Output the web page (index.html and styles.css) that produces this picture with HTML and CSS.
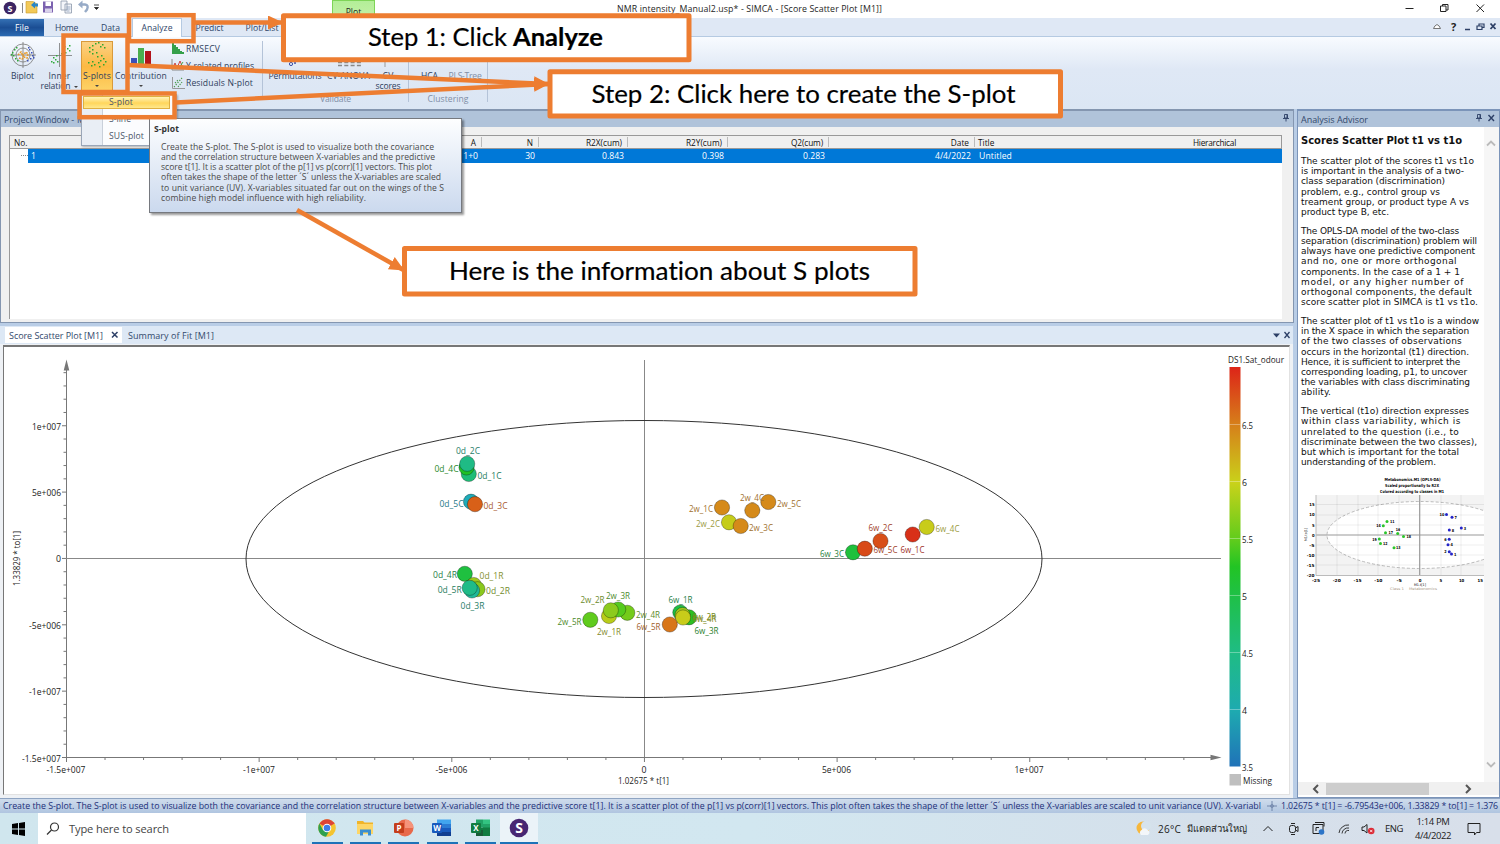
FILE: index.html
```html
<!DOCTYPE html>
<html lang="en">
<head>
<meta charset="utf-8">
<title>NMR intensity_Manual2.usp* - SIMCA</title>
<link rel="stylesheet" href="styles.css">
</head>
<body>
<div class="screen">
  <header class="titlebar">
    <svg class="quick" width="110" height="18" viewBox="0 0 110 18">
      <circle cx="10" cy="8" r="6.3" fill="#3c2463"/>
      <text x="10" y="11.5" class="logo-s">S</text>
      <path d="M22.500 3v10" stroke="#888"/>
      <path d="M26 1.500h7l4 2.500v9H26z" fill="#f3c957" stroke="#c99a2e" stroke-width=".6"/><path d="M31 5l4-3.500v2h3v3h-3v2z" fill="#2a86c8"/>
      <path d="M43 1.500h10v11H43z" fill="#7c62b0"/><path d="M45.500 1.500h5.500v4.500h-5.500z" fill="#fff"/><path d="M45 8.500h7v4h-7z" fill="#d9d2ea"/>
      <path d="M61 1h6v9h-6zM65 4h6.500v9H65z" fill="#f4f6fa" stroke="#8c98aa" stroke-width=".8"/><path d="M66.500 7h4M66.500 9h4M66.500 11h3" stroke="#7a90b0" stroke-width=".7"/>
      <path d="M80.500 4.500h4.500q4 .5 2 5l-2 2.500" fill="none" stroke="#97abc7" stroke-width="2.400"/><path d="M78 4.500l4.500-4v8z" fill="#97abc7"/>
      <path d="M94 5h5M94.500 7.500h4l-2 2z" stroke="#222" stroke-width=".8" fill="#222"/>
    </svg>
    <div class="plot-tab"><span>Plot</span></div>
    <span class="doc-title" data-w="265">NMR intensity_Manual2.usp* - SIMCA - [Score Scatter Plot [M1]]</span>
    <svg class="winctl" width="100" height="18" viewBox="1400 0 100 18" fill="none" stroke="#222">
      <path d="M1405.500 8.500h8M1440.500 6h5.500v5.500h-5.500zM1442.500 6v-1.500h5.500v5.500h-2M1476.500 4.500l7.500 7.500M1484 4.500l-7.500 7.500"/>
    </svg>
  </header>

  <nav class="tabs">
    <span class="tab file"><i data-w="14">File</i></span>
    <span class="tab t-home"><i data-w="23">Home</i></span>
    <span class="tab t-data"><i data-w="19">Data</i></span>
    <span class="tab active"><i data-w="31">Analyze</i></span>
    <span class="tab t-pred"><i data-w="28">Predict</i></span>
    <span class="tab t-list"><i data-w="33">Plot/List</i></span>
    <svg class="helpctl" width="75" height="18" viewBox="1425 18 75 18">
      <path d="M1433.500 28.500h7q-1-3-3.500-4-2.500 1-3.500 4z" fill="#fff" stroke="#555" stroke-width=".8"/>
      <text x="1451" y="31" class="qmark">?</text>
      <path d="M1465 29.500h5" stroke="#2c3f66" stroke-width="1.500"/>
      <path d="M1477 26h5v3.500h-5zM1479 26v-2h5v3.500h-2" fill="none" stroke="#2c3f66" stroke-width="1.200"/>
      <path d="M1490.500 23.500l5 5.500M1495.500 23.500l-5 5.500" stroke="#2c3f66" stroke-width="1.800"/>
    </svg>
  </nav>

  <section class="ribbon">
    <div class="tool w-biplot">
      <svg width="26" height="26" viewBox="0 0 26 26" fill="none"><g stroke="#777" stroke-width=".8"><circle cx="13" cy="13" r="11"/><circle cx="13" cy="13" r="7"/><path d="M13 0v26M0 13h26"/></g><g id="dots-bi"></g><path d="M8 13l3-3 2 4 3-4 2 2-1 4-3-1-2 2-3-1" stroke="#e89a28" stroke-width="1.600" stroke-dasharray="1.800 1"/></svg>
      <span data-w="23">Biplot</span>
    </div>
    <div class="tool w-inner">
      <svg width="26" height="26" viewBox="0 0 26 26"><path d="M12.500 1v24M1 13.500h24" stroke="#777" stroke-width=".8"/><g id="dots-in"></g></svg>
      <span data-w="22">Inner</span><span data-w="37">relation <b class="dd"></b></span>
    </div>
    <div class="tool w-splots hot">
      <svg width="26" height="26" viewBox="0 0 26 26"><g id="dots-s"></g></svg>
      <span data-w="28">S-plots</span><b class="dd"></b>
    </div>
    <div class="tool w-contrib">
      <svg width="26" height="26" viewBox="0 0 26 26"><path d="M3 16h6v8H3z" fill="#3a50b8"/><path d="M10 6h6v18h-6z" fill="#4bae4f"/><path d="M17 9h6v15h-6z" fill="#b3131b"/></svg>
      <span data-w="52">Contribution</span><b class="dd"></b>
    </div>
    <div class="small-tools">
      <div><svg width="14" height="13" viewBox="0 0 14 13"><path d="M1 1h2v2h2v2h2v2h2v2h2v1h2v2H1z" fill="#35a04a"/></svg><span data-w="34">RMSECV</span></div>
      <div><svg width="14" height="13" viewBox="0 0 14 13" fill="none"><path d="M1 0v11h12" stroke="#888"/><path d="M2 9l2-5 2 5 3-7 3 7" stroke="#c44"/><path d="M2 10l3-4 3 3 4-6" stroke="#4a4"/></svg><span data-w="68">Y-related profiles</span></div>
      <div><svg width="14" height="13" viewBox="0 0 14 13"><path d="M1.500 0v11.500H14" stroke="#999" fill="none"/><path d="M3 10l8-9M4 6l3-3M7 10l4-5" stroke="#4a9a4a" stroke-width="1.200" stroke-dasharray="1.300 1.400"/></svg><span data-w="67">Residuals N-plot</span></div>
    </div>
    <div class="group validate">
      <div class="row">
        <div class="tool w-perm"><svg width="26" height="26" viewBox="0 0 26 26"><circle cx="9" cy="22" r="1.600" fill="none" stroke="#3a50a8"/><circle cx="13" cy="21" r="1" fill="#3a50a8"/></svg><span data-w="53">Permutations</span></div>
        <div class="tool w-cva"><svg width="26" height="26" viewBox="0 0 26 26"><path d="M2 20.500h23M2 23.500h23" stroke="#888" stroke-width="1.500" stroke-dasharray="4 2.300"/></svg><span data-w="43">CV-ANOVA</span></div>
        <div class="tool w-cvs"><svg width="26" height="26" viewBox="0 0 26 26"><path d="M10 12v13" stroke="#999"/></svg><span data-w="11">CV</span><span data-w="25">scores</span></div>
      </div>
      <div class="caption" data-w="31">Validate</div>
    </div>
    <div class="group clustering">
      <div class="row">
        <div class="tool w-hca"><svg width="26" height="26"></svg><span data-w="17">HCA</span></div>
        <div class="tool w-pls"><svg width="26" height="26"></svg><span class="dim" data-w="33">PLS-Tree</span></div>
      </div>
      <div class="caption" data-w="41">Clustering</div>
    </div>
  </section>

  <main class="work">
    <div class="left">
      <section class="project">
        <div class="pane-head"><span data-w="70">Project Window -</span><span>M1</span>
          <svg class="pin" width="10" height="12" viewBox="0 0 10 12"><path d="M3.500 2.500h3v3.500h-3zM2 6.500h6M5 6.500v3M6 2.500v4" stroke="#2c3f66" stroke-width=".9" fill="none"/></svg>
        </div>
        <div class="list">
          <div class="grid head"><span class="l">No.</span><span>A</span><span>N</span><span data-w="36">R2X(cum)</span><span data-w="36">R2Y(cum)</span><span data-w="32">Q2(cum)</span><span>Date</span><span class="l">Title</span><span class="l" data-w="43">Hierarchical</span></div>
          <div class="rowline"><i class="stub"></i><div class="grid sel"><span class="l">1</span><span>1+0</span><span>30</span><span>0.843</span><span>0.398</span><span>0.283</span><span data-w="36">4/4/2022</span><span class="l ttl" data-w="33">Untitled</span></div></div>
        </div>
      </section>
      <section class="doc">
        <div class="doc-tabs">
          <span class="doc-tab on"><i data-w="94">Score Scatter Plot [M1]</i><svg width="8" height="8" viewBox="0 0 8 8"><path d="M1 1l5.500 5.500M6.500 1L1 6.500" stroke="#2c3f66" stroke-width="1.500"/></svg></span>
          <span class="doc-tab"><i data-w="86">Summary of Fit [M1]</i></span>
          <svg class="doc-ctl" width="20" height="10" viewBox="0 0 20 10"><path d="M1 3.500h7L4.500 7.500z" fill="#2c3f66"/><path d="M12.500 2l5 6M17.500 2l-5 6" stroke="#2c3f66" stroke-width="1.300"/></svg>
        </div>
        <div class="plot">
          <svg id="chart" width="1285" height="447" viewBox="4 347 1285 447">
            <defs><linearGradient id="scale" x1="0" y1="0" x2="0" y2="1">
              <stop offset="0" stop-color="#dd2418"/><stop offset=".145" stop-color="#d6801a"/><stop offset=".29" stop-color="#c9d21a"/><stop offset=".43" stop-color="#62cc1c"/><stop offset=".5" stop-color="#22c424"/><stop offset=".575" stop-color="#1fc048"/><stop offset=".715" stop-color="#1fbc84"/><stop offset=".86" stop-color="#1eaab0"/><stop offset="1" stop-color="#2072b8"/>
            </linearGradient></defs>
          </svg>
        </div>
      </section>
    </div>
    <aside class="advisor">
      <div class="pane-head"><span data-w="67">Analysis Advisor</span>
        <svg class="pin" width="24" height="12" viewBox="0 0 24 12"><path d="M3.500 2.500h3v3.500h-3zM2 6.500h6M5 6.500v3M6 2.500v4" stroke="#2c3f66" stroke-width=".9" fill="none"/><path d="M14.500 3l5.500 6M20 3l-5.500 6" stroke="#2c3f66" stroke-width="1.400"/></svg>
      </div>
      <div class="adv-body">
        <div class="adv-text">
          <h1><span data-w="161">Scores Scatter Plot t1 vs t1o</span></h1>
          <p><span data-w="173">The scatter plot of the scores t1 vs t1o</span><span data-w="163">is important in the analysis of a two-</span><span data-w="144">class separation (discrimination)</span><span data-w="139">problem, e.g., control group vs</span><span data-w="168">treament group, or product type A vs</span><span data-w="88">product type B, etc.</span></p>
          <p><span data-w="158">The OPLS-DA model of the two-class</span><span data-w="176">separation (discrimination) problem will</span><span data-w="174">always have one predictive component</span><span data-w="156">and no, one or more orthogonal</span><span data-w="159">components. In the case of a 1 + 1</span><span data-w="163">model, or any higher number of</span><span data-w="171">orthogonal components, the default</span><span data-w="177">score scatter plot in SIMCA is t1 vs t1o.</span></p>
          <p><span data-w="178">The scatter plot of t1 vs t1o is a window</span><span data-w="168">in the X space in which the separation</span><span data-w="161">of the two classes of observations</span><span data-w="168">occurs in the horizontal (t1) direction.</span><span data-w="159">Hence, it is sufficient to interpret the</span><span data-w="166">corresponding loading, p1, to uncover</span><span data-w="169">the variables with class discriminating</span><span data-w="30">ability.</span></p>
          <p><span data-w="168">The vertical (t1o) direction expresses</span><span data-w="160">within class variability, which is</span><span data-w="158">unrelated to the question (i.e., to</span><span data-w="176">discriminate between the two classes),</span><span data-w="158">but which is important for the total</span><span data-w="135">understanding of the problem.</span></p>
          <svg id="mini" width="183" height="118" viewBox="1301 476 183 118"></svg>
        </div>
        <div class="vbar"><svg width="10" height="7" viewBox="0 0 10 7"><path d="M1 5.500l4-4 4 4" class="sc"/></svg><svg width="10" height="7" viewBox="0 0 10 7"><path d="M1 1.500l4 4 4-4" class="sc"/></svg></div>
      </div>
      <div class="hbar"><svg width="8" height="10" viewBox="0 0 8 10"><path d="M6 1L2 5l4 4" class="hc"/></svg><i></i><svg width="8" height="10" viewBox="0 0 8 10"><path d="M2 1l4 4-4 4" class="hc"/></svg></div>
    </aside>
  </main>

  <footer class="status">
    <span class="msg" data-w="1258">Create the S-plot. The S-plot is used to visualize both the covariance and the correlation structure between X-variables and the predictive score t[1]. It is a scatter plot of the p[1] vs p(corr)[1] vectors. This plot often takes the shape of the letter ´S´ unless the X-variables are scaled to unit variance (UV). X-variabl</span>
    <svg width="12" height="12" viewBox="0 0 12 12"><path d="M6 1v10M1 6h10" stroke="#6a7fa5" stroke-width=".9"/><circle cx="6" cy="6" r="1.500" fill="none" stroke="#6a7fa5" stroke-width=".7"/></svg>
    <span data-w="217">1.02675 * t[1] = -6.79543e+006, 1.33829 * to[1] = 1.376</span>
  </footer>

  <footer class="taskbar">
    <div class="start"><svg width="14" height="14" viewBox="0 0 14 14"><path d="M0 2l6-.9v5.400H0zM7 1l6-1v6.500H7zM0 7.500h6V13l-6-.9zM7 7.500h6V14l-6-1z" fill="#000"/></svg></div>
    <div class="search"><svg width="14" height="14" viewBox="0 0 14 14" fill="none" stroke="#333" stroke-width="1.200"><circle cx="8.500" cy="5" r="4"/><path d="M5.500 8L1 12.500"/></svg><span data-w="100">Type here to search</span></div>
    <div class="apps">
      <div class="app"><svg width="20" height="20" viewBox="0 0 20 20"><circle cx="10" cy="10" r="8.800" fill="#f4c430"/><path d="M10 10L2.400 5.600A8.800 8.800 0 0 1 17.600 5.600z" fill="#dd4436"/><path d="M2.400 5.600A8.800 8.800 0 0 0 9 18.700L13 11.500 6 12z" fill="#2fa04f"/><path d="M10 5.600h7.600l-.5-1H8z" fill="#dd4436"/><circle cx="10" cy="10" r="4.300" fill="#fff"/><circle cx="10" cy="10" r="3.300" fill="#3f7de8"/></svg></div>
      <div class="app"><svg width="20" height="20" viewBox="0 0 20 20"><path d="M2 3h6l1.500 1.500H18V16H2z" fill="#f0b429"/><path d="M2 6h16v10H2z" fill="#fdd667"/><path d="M5 17.500v-6h11v6h-3v-3H8v3z" fill="#3b8ed0"/></svg></div>
      <div class="app"><svg width="20" height="20" viewBox="0 0 20 20"><circle cx="11" cy="10" r="8.500" fill="#e8694a"/><path d="M11 1.500a8.500 8.500 0 0 1 8.500 8.500H11z" fill="#f5937a"/><rect x="0" y="5" width="10" height="10" rx="1" fill="#c43e1c"/><text x="5" y="13" class="ms">P</text></svg></div>
      <div class="app"><svg width="20" height="20" viewBox="0 0 20 20"><path d="M5 1.500h14v5H5z" fill="#41a5ee"/><path d="M5 6h14v4H5z" fill="#2b7cd3"/><path d="M5 10h14v4H5z" fill="#185abd"/><path d="M5 14h14v4H5z" fill="#103f91"/><rect x="0" y="5" width="10" height="10" rx="1" fill="#185abd"/><text x="5" y="13" class="ms">W</text></svg></div>
      <div class="app"><svg width="20" height="20" viewBox="0 0 20 20"><path d="M5 1.500h7v8H5z" fill="#21a366"/><path d="M12 1.500h7v5h-7z" fill="#33c481"/><path d="M12 6h7v5h-7z" fill="#21a366"/><path d="M5 9.500h14V18H5z" fill="#107c41"/><path d="M5 12h7v6H5z" fill="#185c37"/><rect x="0" y="5" width="10" height="10" rx="1" fill="#107c41"/><text x="5" y="13" class="ms">X</text></svg></div>
      <div class="app cur"><svg width="20" height="20" viewBox="0 0 20 20"><circle cx="10" cy="10" r="9.300" fill="#482672"/><text x="10" y="15" class="bigs">S</text></svg></div>
    </div>
    <div class="tray">
      <svg width="18" height="18" viewBox="0 0 18 18"><circle cx="8" cy="8" r="6.500" fill="#f6b73c"/><circle cx="11" cy="6" r="5" fill="#d6e3ec"/><path d="M6 15a3 3 0 0 1 .5-5 3.500 3.500 0 0 1 6 0A2.700 2.700 0 0 1 13 15z" fill="#f3f6f9"/></svg>
      <span class="temp" data-w="23">26°C</span><span class="thai" data-w="60">มีแดดส่วนใหญ่</span>
      <svg class="tr" viewBox="1255 813 125 31" width="125" height="31" fill="none" stroke="#222">
        <path d="M1263.500 831l4.500-4.500 4.500 4.500"/>
        <rect x="1289.500" y="825.500" width="6" height="7" rx="2"/><path d="M1295.500 828l2.500-1.500v5l-2.500-1.500M1291 823.500h4M1291 834.500h4"/>
        <path d="M1313 824.500h10v9h-10zM1315 822.500h9v4M1316 831v-3.500h3"/><circle cx="1321.500" cy="832" r="2.800" fill="#2b74c8" stroke="none"/>
        <path d="M1339 833a9 9 0 0 1 10-8M1342 833.500a6 6 0 0 1 7-5.500M1345 833.500a3.500 3.500 0 0 1 4-3" stroke-width=".9"/>
        <path d="M1362 827h2l3-2.500v8.500l-3-2.500h-2z"/><circle cx="1371.200" cy="831" r="3.300" fill="#dc2a35" stroke="none"/><path d="M1370 829.800l2.400 2.400M1372.400 829.800l-2.400 2.400" stroke="#fff" stroke-width=".8"/>
      </svg>
      <span class="lang" data-w="18">ENG</span>
      <div class="clock"><span data-w="33">1:14 PM</span><span data-w="36">4/4/2022</span></div>
      <svg class="note" width="14" height="14" viewBox="0 0 14 14"><path d="M1 1.500h12v9H9.500L7.500 13v-2.500H1z" fill="none" stroke="#222"/></svg>
    </div>
  </footer>

  <div class="menu">
    <div class="mi hl"><span data-w="24">S-plot</span></div>
    <div class="mi"><span data-w="22">S-line</span></div>
    <div class="mi"><span data-w="35">SUS-plot</span></div>
  </div>
  <div class="tooltip">
    <strong><span data-w="25">S-plot</span></strong>
    <p><span data-w="273">Create the S-plot. The S-plot is used to visualize both the covariance</span><span data-w="274">and the correlation structure between X-variables and the predictive</span><span data-w="271">score t[1]. It is a scatter plot of the p[1] vs p(corr)[1] vectors. This plot</span><span data-w="280">often takes the shape of the letter ´S´ unless the X-variables are scaled</span><span data-w="283">to unit variance (UV). X-variables situated far out on the wings of the S</span><span data-w="205">combine high model influence with high reliability.</span></p>
  </div>
  <svg class="notes" width="1500" height="844" viewBox="0 0 1500 844">
    <defs><marker id="tip" orient="auto" markerUnits="userSpaceOnUse" markerWidth="15" markerHeight="14" refX="14" refY="7"><path d="M0 0l15 7-15 7z" fill="#ed7d31"/></marker></defs>
    <g fill="none" stroke="#ed7d31" stroke-width="4.500">
      <rect x="129" y="15.200" width="64.500" height="26"/>
      <rect x="63.500" y="35.500" width="64" height="56.500"/>
      <rect x="79.500" y="93.500" width="95" height="23.700"/>
      <g marker-end="url(#tip)">
        <path d="M195 22.500H282"/><path d="M128 65L548 84"/><path d="M176 102.500L548 84"/><path d="M297 210L403.500 270"/>
      </g>
      <g fill="#fff" stroke-width="5" stroke-linejoin="round">
        <rect x="283.500" y="15.800" width="405.500" height="44"/><rect x="550" y="71.800" width="510.500" height="44.200"/><rect x="404.500" y="248.500" width="510.500" height="45.500"/>
      </g>
    </g>
    <g class="note-text">
      <text x="368" y="45.500" textLength="139" lengthAdjust="spacingAndGlyphs">Step 1: Click</text><text x="513" y="45.500" textLength="90" lengthAdjust="spacingAndGlyphs" font-weight="700">Analyze</text>
      <text x="591.500" y="102.500" textLength="424" lengthAdjust="spacingAndGlyphs">Step 2: Click here to create the S-plot</text>
      <text x="449" y="279.500" textLength="421" lengthAdjust="spacingAndGlyphs">Here is the information about S plots</text>
    </g>
  </svg>
</div>
<script src="app.js"></script>
</body>
</html>
```
FILE: styles.css
```css
* { box-sizing: border-box; }
body { margin: 0; font-family: "Open Sans", "Noto Sans", sans-serif; font-size: 8.6px; color: #1e1e1e; }
i { font-style: normal; }
svg { display: block; flex: none; }
[data-w] { white-space: nowrap; }
.screen { position: relative; width: 1500px; height: 844px; overflow: hidden; display: flex; flex-direction: column; background: #dce6f4; }

.titlebar { height: 18px; flex: none; background: #fff; display: flex; }
.quick { width: 110px; }
.logo-s { font: 700 9px "Open Sans", sans-serif; fill: #fff; text-anchor: middle; }
.plot-tab { margin-left: 222px; width: 43px; height: 18px; background: linear-gradient(#b3ee98, #c4f0a6); border: 1px solid #7ed457; border-bottom: 0; display: flex; justify-content: center; padding-top: 5px; line-height: 12px; }
.doc-title { margin-left: 242px; line-height: 19px; font-size: 8.8px; }
.winctl { margin-left: auto; }

.tabs { height: 19px; flex: none; display: flex; background: #dfe8f5; border-bottom: 1px solid #b5cae2; line-height: 20px; color: #2e4468; }
.tab { display: flex; justify-content: center; height: 18px; }
.file { width: 44px; height: 17px; margin-top: 1px; line-height: 18px; background: linear-gradient(#3470b4, #1b4e94 50%, #2b6ab2); color: #fff; }
.t-home { width: 45px; }
.t-data { width: 43px; }
.active { width: 50px; height: 19px; background: #fff; border: 1px solid #b5cae2; border-bottom: 0; line-height: 19px; }
.t-pred { width: 55px; }
.t-list { width: 50px; }
.helpctl { margin-left: auto; }
.qmark { font: 700 11px "Open Sans", sans-serif; fill: #222; }

.ribbon { height: 72px; flex: none; display: flex; padding-top: 4px; background: linear-gradient(#f8fbff, #dfe8f5 45%, #dbe6f4); color: #2e3e5c; }
.tool { display: flex; flex-direction: column; align-items: center; line-height: 10px; padding-top: 1px; }
.tool > svg { margin-bottom: 3px; }
.dd { display: inline-block; width: 0; height: 0; border: 2px solid transparent; border-top-color: #444; border-bottom: 0; margin: 1px; }
.tool > .dd { margin-top: 4px; }
.w-biplot { width: 45px; }
.w-inner { width: 29px; margin-right: 7px; }
.w-splots { width: 32px; height: 51px; }
.hot { background: linear-gradient(#fbd184, #fcb943 50%, #fdd367); border: 1px solid #d99a3b; padding-top: 0; }
.w-contrib { width: 56px; }
.small-tools { width: 94px; padding: 1px 0 0 2px; border-right: 1px solid #b4c3d8; height: 58px; display: flex; flex-direction: column; gap: 4.300px; }
.small-tools div { display: flex; align-items: center; height: 13px; }
.small-tools svg { margin-right: 1px; }
.group { border-right: 1px solid #b4c3d8; height: 61px; display: flex; flex-direction: column; align-items: center; justify-content: space-between; }
.validate { width: 146px; }
.clustering { width: 79px; }
.row { display: flex; width: 100%; height: 53px; flex: none; }
.w-perm { width: 64px; } .w-cva { width: 43px; } .w-cvs { width: 36px; }
.w-hca { width: 41px; } .w-pls { width: 30px; }
.dim, .caption { color: #7f8ea6; }
.caption { line-height: 10px; margin-top: 0; }

.work { flex: 1; display: flex; min-height: 0; background: #b9cde6; }
.left { width: 1294px; display: flex; flex-direction: column; }
.project { height: 214px; flex: none; border: 1px solid #8496b0; border-top-width: 2px; background: #f0f0f0; }
.pane-head { height: 16px; background: #b0c3da; display: flex; gap: 3px; line-height: 17px; padding-left: 3px; color: #33496c; font-size: 9px; }
.pin { margin: 1px 3px 0 auto; }
.project .pin { margin-right: 2px; }
.advisor .pin { margin-right: 1px; }
.list { margin: 8px 11px 0 8px; height: 184px; background: #fff; border-left: 1px solid #999; }
.grid { display: grid; grid-template-columns: 425px 47px 57px 89px 100px 101px 146px 215px 1fr; }
.grid span { text-align: right; padding-right: 6px; justify-self: end; }
.grid .l { justify-self: start; padding: 0 0 0 3px; text-align: left; }
.head { height: 14px; line-height: 13px; background: #f0f0f0; border: 1px solid #999; border-left: 0; font-size: 8.3px; color: #111; }
.head span:not(.l) { position: relative; }
.head span:not(.l)::after { content: ""; position: absolute; right: 0; top: 1px; height: 10px; border-right: 1px solid #bbb; }
.head .l:first-child { padding-left: 4px; }
.rowline { display: flex; height: 13.500px; }
.stub { width: 18px; height: 7px; border-bottom: 1px dotted #888; clip-path: inset(0 0 0 10px); flex: none; }
.sel { flex: 1; background: #0078d7; color: #fff; line-height: 14px; grid-template-columns: 407px 47px 57px 89px 100px 101px 146px 215px 1fr; }
.sel span { padding-right: 4px; }
.sel .ttl { padding-left: 4px; }
.doc { flex: 1; display: flex; flex-direction: column; background: #eef1f5; border-top: 3px solid #b9cde6; padding: 0 3px 3px; border-right: 1px solid #b9cde6; }
.doc-tabs { height: 18px; flex: none; background: #dde8f5; display: flex; margin: 0 -3px; padding: 1px 6px 0 5px; line-height: 15px; font-size: 9px; color: #33496c; }
.doc-tab { display: flex; align-items: center; gap: 8px; padding: 0 7px 0 6px; height: 16px; }
.doc-tab.on { background: #fff; padding-left: 4px; }
.doc-tab.on svg { margin-right: -4px; }
.doc-ctl { margin: 3px -5px 0 auto; }
.plot { flex: 1; border: 1px solid #e2e2e2; border-left: 1px solid #777; border-top: 2px solid #777; background: #fff; margin-top: 1px; overflow: hidden; }
.plot text { font-size: 8.300px; dominant-baseline: central; fill: #222; }

.advisor { flex: 1; margin-left: 3px; border: 1px solid #7b94b9; border-top-width: 2px; background: #fff; display: flex; flex-direction: column; }
.adv-body { flex: 1; display: flex; min-height: 0; }
.adv-text { width: 186px; padding: 8px 0 0 3px; font: 9px/10.200px "DejaVu Sans", sans-serif; color: #111; }
.adv-text h1 { font-size: 10px; line-height: 12px; margin: 0 0 9px; }
.adv-text p { margin: 0 0 8.600px; }
.adv-text p span, .adv-text h1 span, .tooltip span { display: block; width: max-content; }
.vbar { flex: 1; background: #f6f6f6; display: flex; flex-direction: column; justify-content: space-between; align-items: center; padding: 13px 2px 14px 0; }
.sc { fill: none; stroke: #bbb; stroke-width: 1.800; }
.hc { fill: none; stroke: #555; stroke-width: 2; }
.hbar { height: 13px; margin-bottom: 2px; background: #f0f0f0; display: flex; align-items: center; padding-left: 14px; }
.hbar i { width: 103px; height: 12px; background: #cdcdcd; margin: 0 35px 0 6px; }

.status { height: 15px; flex: none; border-top: 1px solid #8ea4c2; background: linear-gradient(#cfdcec, #b0c5e0); display: flex; align-items: center; color: #1d2f78; font-size: 8.800px; padding-left: 3px; }
.status svg { margin: 0 3px 0 5px; }

.taskbar { height: 31px; flex: none; display: flex; background: linear-gradient(90deg, #d0e6ee, #d2e7f0 50%, #d5e0eb 80%, #d8dfea); }
.start { width: 38px; display: flex; align-items: center; padding-left: 12px; }
.search { width: 268px; background: #fff; display: flex; align-items: center; gap: 9px; padding-left: 8px; font-size: 11.100px; color: #444; }
.apps { display: flex; padding-left: 2px; gap: 0.400px; }
.app { width: 38px; display: flex; justify-content: center; padding-top: 5px; background: linear-gradient(#1d72b8, #1d72b8) center bottom / 31px 2px no-repeat; }
.app.cur { background: linear-gradient(#1d72b8, #1d72b8) center bottom / 38px 2px no-repeat, #ebf3f8; }
.ms { font: 700 8px "Open Sans", sans-serif; fill: #fff; text-anchor: middle; }
.bigs { font: 700 14px "Open Sans", sans-serif; fill: #fff; text-anchor: middle; }
.tray { margin-left: auto; display: flex; align-items: center; font-size: 9.500px; color: #222; width: 365px; }
.temp { margin-left: 5px; width: 23px; font-size: 10px; }
.thai { margin-left: 6px; width: 60px; }
.tr { margin-left: 8px; }
.lang { margin-left: 5px; }
.clock { width: 36px; margin-left: 12px; display: flex; flex-direction: column; align-items: center; line-height: 14px; }
.note { margin-left: 16px; }

.menu { position: absolute; left: 81px; top: 94px; width: 96px; height: 52px; background: linear-gradient(90deg, #e9eef5 20px, #c9d0da 20px, #c9d0da 21px, #fbfcfe 21px); border: 1px solid #9aa6b8; color: #4a5568; padding-top: 1px; box-shadow: 1px 1px 2px #0004; }
.mi { height: 17px; line-height: 16px; padding-left: 27px; }
.mi.hl { height: 13px; line-height: 11px; margin: 0 6px 2px 1px; padding-left: 25px; border: 1px solid #e0b040; background: linear-gradient(#fff3b8, #ffd65c 55%, #ffe88c); }
.tooltip { position: absolute; left: 149px; top: 118px; width: 313px; height: 95px; padding: 5px 0 0 4px; background: linear-gradient(#fdfeff, #cbd9ee); border: 1px solid #76797f; box-shadow: 2px 2px 2px #0006; color: #4a4a4a; line-height: 10.200px; }
.tooltip strong { color: #333; }
.tooltip p { margin: 7.500px 0 0 7px; }
.notes { position: absolute; left: 0; top: 0; }
.note-text { font: 25px Lato, "Open Sans", sans-serif; font-variant-ligatures: none; fill: #000; stroke: #000; stroke-width: .2; }
```
FILE: app.js
```js
const NS = 'http://www.w3.org/2000/svg';
function add(parent, tag, attrs, text) {
  const el = document.createElementNS(NS, tag);
  for (const k in attrs) el.setAttribute(k, attrs[k]);
  if (text !== undefined) el.textContent = text;
  parent.appendChild(el);
  return el;
}
const chart = document.getElementById('chart');
const line = (x1, y1, x2, y2, c = '#777') => add(chart, 'line', { x1, y1, x2, y2, stroke: c });
const label = (x, y, w, t, extra = {}) =>
  add(chart, 'text', { x, y, textLength: w, lengthAdjust: 'spacingAndGlyphs', ...extra }, t);

// axes
line(66.5, 362, 66.5, 758);
line(66, 757.5, 1216, 757.5);
line(66, 558.5, 1221, 558.5, '#888');
line(644.5, 360, 644.5, 757, '#888');
add(chart, 'path', { d: 'M66.500 359.500l2.800 11h-5.600zM1221.500 757.500l-11 2.800v-5.600z', fill: '#777' });
for (let i = 0; i < 30; i++) {
  const x = 66.5 + i * 38.53;
  if (x < 1210) line(x, 757, x, i % 5 ? 760 : 762);
  const y = 757.5 - i * 13.27;
  if (y > 370) line(i % 5 ? 63.5 : 62, y, 66, y);
}
[['1e+007', 426, 29], ['5e+006', 492, 29], ['0', 558.5, 5], ['-5e+006', 625, 32], ['-1e+007', 691.5, 32], ['-1.5e+007', 758, 39]]
  .forEach(([t, y, w]) => label(61 - w, y, w, t));
[['-1.5e+007', 66, 39], ['-1e+007', 259, 32], ['-5e+006', 451.500, 32], ['0', 644, 5], ['5e+006', 836.500, 29], ['1e+007', 1029, 29]]
  .forEach(([t, x, w]) => label(x - w / 2, 769.5, w, t));
label(618, 780.5, 51, '1.02675 * t[1]');
label(0, 0, 55, '1.33829 * to[1]', { transform: 'translate(16.500 586) rotate(-90)' });
add(chart, 'ellipse', { cx: 644, cy: 559, rx: 398, ry: 138.500, fill: 'none', stroke: '#333' });

// name, cx, cy, fill, label x, label y, label colour
const pts = [
  ['0d_1C', 468.8, 474, '#1fbd77', 477.500, 475, '#267d60'],
  ['0d_4C', 466.5, 467.5, '#1fbf25', 434.500, 468, '#2a8a2a'],
  ['0d_2C', 467.2, 463.8, '#1fbb85', 456, 450, '#267d68'],
  ['0d_5C', 471, 501.7, '#1eabb8', 439.500, 503, '#267a88'],
  ['0d_3C', 475, 504.2, '#d86018', 483.500, 505.500, '#a85a30'],
  ['0d_4R', 464.8, 573.8, '#1fc040', 433, 574.500, '#267d48'],
  ['0d_1R', 473.8, 585, '#9ec81d', 479.500, 575, '#85902c'],
  ['0d_2R', 477.5, 589.2, '#8ac81d', 486, 590.500, '#728a2c'],
  ['0d_3R', 472, 590.5, '#1fb89a', 460.500, 605.300, '#267d68'],
  ['0d_5R', 469.7, 587.8, '#1fbb88', 437.700, 589, '#267d60'],
  ['2w_5R', 590.3, 619.8, '#60cb1d', 557.500, 621, '#4c8a2a'],
  ['2w_1R', 609, 616, '#b8cc1a', 597, 631, '#828a2a'],
  ['2w_4R', 627.3, 612.8, '#74cb1a', 636, 614, '#5c8a2a'],
  ['2w_3R', 618.2, 609.5, '#55cb1d', 606, 595.700, '#4c8a2a'],
  ['2w_2R', 610.8, 610.3, '#8ccb1d', 580.500, 599.500, '#6c8a2a'],
  ['6w_1R', 680.3, 612.5, '#1fbf45', 668.500, 599, '#268045'],
  ['6w_3R', 689, 617.3, '#2bc022', 694.500, 630, '#2a802a'],
  ['6w_2R', 682.5, 615, '#a0c81d', 692, 616.500, '#708a20'],
  ['6w_4R', 683, 617.5, '#c8cc1a', 692.500, 618.500, '#858a20'],
  ['6w_5R', 669.8, 624.5, '#d8761a', 636.500, 626, '#a06028'],
  ['2w_1C', 722, 507.5, '#d58a1a', 689, 508.500, '#a0702c'],
  ['2w_2C', 729, 522.3, '#c5cc1a', 696, 523.500, '#9a9a40'],
  ['2w_3C', 740.7, 526, '#d58a1a', 749, 527, '#a0702c'],
  ['2w_4C', 752.3, 510.5, '#d58a1a', 740, 497, '#a0702c'],
  ['2w_5C', 768.3, 502, '#d58a1a', 777, 503, '#a0702c'],
  ['6w_3C', 853, 552.3, '#1fc03c', 820, 553.500, '#268040'],
  ['6w_5C', 864.8, 548.7, '#d84a18', 873.500, 549.500, '#a04028'],
  ['6w_2C', 880.5, 541, '#d84f18', 868.500, 527, '#a04028'],
  ['6w_1C', 912.7, 534.5, '#d83018', 900.500, 549.500, '#a03028'],
  ['6w_4C', 926.7, 527, '#c8cc1a', 935.500, 528, '#9a9a40'],
];
for (const [, cx, cy, f] of pts) add(chart, 'circle', { cx, cy, r: 7.6, fill: f, stroke: '#0005', 'stroke-width': .9 });
for (const [t, , , , x, y, c] of pts) label(x, y, 24, t, { style: `fill:${c}` });

// colour legend
label(1228, 359.5, 56, 'DS1.Sat_odour');
add(chart, 'rect', { x: 1229.5, y: 367, width: 11, height: 399.5, fill: 'url(#scale)' });
['6.5', '6', '5.5', '5', '4.5', '4', '3.5'].forEach((t, i) => {
  const y = 424.5 + i * 57;
  if (i < 6) line(1229.5, y, 1240.5, y, '#fff5');
  label(1242, y + .5, t.length > 1 ? 11 : 5, t);
});
add(chart, 'rect', { x: 1229.5, y: 774, width: 11.5, height: 11.5, fill: '#bfbfbf' });
label(1243, 780, 29, 'Missing');

// advisor thumbnail
const mini = document.getElementById('mini');
add(mini, 'rect', { x: 1316, y: 495, width: 168, height: 80, fill: '#f3f3f3' });
add(mini, 'ellipse', { cx: 1420, cy: 535, rx: 93, ry: 33.500, fill: '#fff', stroke: '#aaa', 'stroke-width': .8, 'stroke-dasharray': '3 2' });
add(mini, 'path', { d: 'M1316 504.500h168M1316 515h168M1316 525h168M1316 545h168M1316 555h168M1316 565h168M1337 495v80M1358 495v80M1378 495v80M1399 495v80M1441 495v80M1461 495v80', stroke: '#0001', fill: 'none' });
add(mini, 'path', { d: 'M1316 535h168M1419.700 495v80', stroke: '#999', 'stroke-width': 1.200 });
add(mini, 'path', { d: 'M1316 495v80.500h168', stroke: '#bbb', fill: 'none' });
const mt = (x, y, w, t, b = 700, s = 4.2) => add(mini, 'text', { x, y, textLength: w, lengthAdjust: 'spacingAndGlyphs', 'font-size': s, 'font-weight': b, 'font-family': 'DejaVu Sans' }, t);
mt(1384.500, 481, 56, 'Metabonomics.M1 (OPLS-DA)');
mt(1385, 487, 54, 'Scaled proportionally to R2X');
mt(1380, 493, 64, 'Colored according to classes in M1');
[15, 10, 5, 0, -5, -10, -15, -20].forEach((v, i) => { const w = String(v).length * 2.6; mt(1314.500 - w, 506.300 + i * 10.100, w, v); });
[-25, -20, -15, -10, -5, 0, 5, 10, 15].forEach((v, i) => { const w = String(v).length * 2.7; mt(Math.min(1316 + i * 20.800 - w / 2, 1477.500), 581.500, w, v); });
mt(1414, 586, 12, 'M1.t[1]', 400, 3.5);
mt(1390, 589.500, 14, 'Class 1', 400, 3.5).setAttribute('fill', '#a98');
mt(1409, 589.500, 28, 'Metabonomics', 400, 3.5).setAttribute('fill', '#a98');
const ml = mt(0, 0, 13, 'M1.to[1]', 400, 3.5);
ml.setAttribute('transform', 'translate(1306.500 541) rotate(-90)');
[[1387, 521.5, '11', 3], [1383.3, 525.8, '14', -7], [1385.5, 532.8, '17', 3], [1397.7, 533.5, '16', -2, -4], [1403.5, 536.5, '18', 3], [1379.3, 539, '19', -7], [1380.5, 543.5, '12', 2.500], [1394, 547.8, '13', 2]]
  .forEach(([x, y, t, dx, dy = 0]) => { add(mini, 'circle', { cx: x, cy: y, r: 1.5, fill: '#2ac52a' }); mt(x + dx, y + 1.500 + dy, 4.500, t, 700, 4); });
[[1446.5, 514.5, '10', -7], [1452, 517.3, '7', 2.500], [1461.3, 528, '3', 2.500], [1449.3, 530, '8', 2.500], [1449.2, 539.3, '6', -5], [1448, 544.7, '4', 2.500], [1449.3, 551.8, '2', -5], [1451.5, 554, '1', 2.500]]
  .forEach(([x, y, t, dx]) => { add(mini, 'circle', { cx: x, cy: y, r: 1.5, fill: '#2323c8' }); mt(x + dx, y + 1.500, t.length * 2.4, t, 700, 4); });

// scattered dots inside the ribbon icons
const dots = (id, list, fill) => list.forEach(([x, y]) => add(document.getElementById(id), 'rect', { x, y, width: 1.5, height: 1.5, fill }));
dots('dots-bi', [[2, 10], [4, 7], [3, 13], [5, 16], [7, 18], [1, 12], [6, 5]], '#2faa3a');
dots('dots-bi', [[21, 10], [19, 7], [22, 13], [20, 16], [17, 18], [23, 15], [18, 5]], '#3a50b8');
dots('dots-in', [[4, 19], [6, 15], [8, 17], [10, 19], [9, 13], [14, 11], [16, 8], [18, 10], [20, 6], [22, 3], [17, 4], [15, 14], [6, 20], [22, 8]], '#2faa3a');
dots('dots-s', [[8, 3], [11, 1], [14, 0], [18, 2], [20, 5], [16, 4], [5, 5], [5, 9], [8, 7], [8, 11], [12, 10], [13, 14], [17, 13], [19, 16], [21, 19], [19, 22], [15, 24], [14, 20], [10, 22], [7, 23], [4, 20], [8, 19], [16, 18]], '#2fa62f');

// spread each label over its column width
document.querySelectorAll('[data-w]').forEach(el => {
  const r = document.createRange();
  r.selectNodeContents(el);
  const n = el.textContent.length;
  el.style.letterSpacing = (el.dataset.w - r.getBoundingClientRect().width) / n + 'px';
});
```
